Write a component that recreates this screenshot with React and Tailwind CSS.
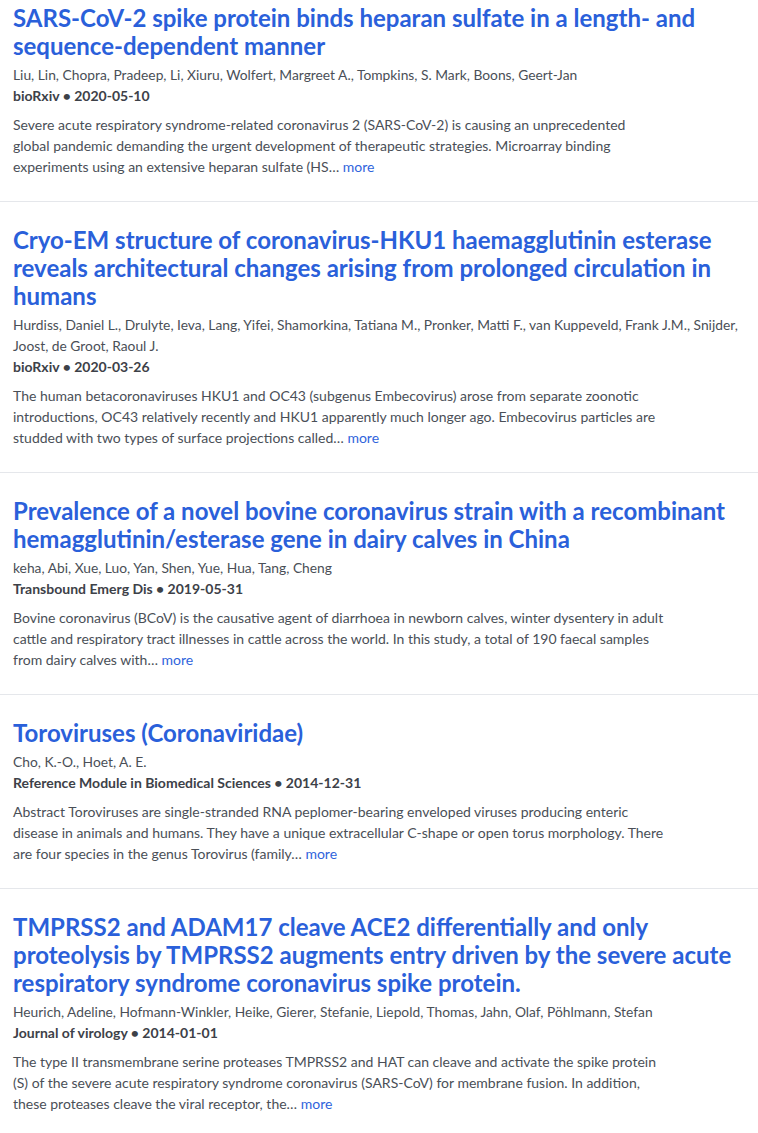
import React from "react";

const items = [
  {
    title: "SARS-CoV-2 spike protein binds heparan sulfate in a length- and sequence-dependent manner",
    authors: "Liu, Lin, Chopra, Pradeep, Li, Xiuru, Wolfert, Margreet A., Tompkins, S. Mark, Boons, Geert-Jan",
    journal: "bioRxiv",
    date: "2020-05-10",
    abstract:
      "Severe acute respiratory syndrome-related coronavirus 2 (SARS-CoV-2) is causing an unprecedented global pandemic demanding the urgent development of therapeutic strategies. Microarray binding experiments using an extensive heparan sulfate (HS…",
  },
  {
    title:
      "Cryo-EM structure of coronavirus-HKU1 haemagglutinin esterase reveals architectural changes arising from prolonged circulation in humans",
    authors:
      "Hurdiss, Daniel L., Drulyte, Ieva, Lang, Yifei, Shamorkina, Tatiana M., Pronker, Matti F., van Kuppeveld, Frank J.M., Snijder, Joost, de Groot, Raoul J.",
    journal: "bioRxiv",
    date: "2020-03-26",
    abstract:
      "The human betacoronaviruses HKU1 and OC43 (subgenus Embecovirus) arose from separate zoonotic introductions, OC43 relatively recently and HKU1 apparently much longer ago. Embecovirus particles are studded with two types of surface projections called…",
  },
  {
    title:
      "Prevalence of a novel bovine coronavirus strain with a recombinant hemagglutinin/esterase gene in dairy calves in China",
    authors: "keha, Abi, Xue, Luo, Yan, Shen, Yue, Hua, Tang, Cheng",
    journal: "Transbound Emerg Dis",
    date: "2019-05-31",
    abstract:
      "Bovine coronavirus (BCoV) is the causative agent of diarrhoea in newborn calves, winter dysentery in adult cattle and respiratory tract illnesses in cattle across the world. In this study, a total of 190 faecal samples from dairy calves with…",
  },
  {
    title: "Toroviruses (Coronaviridae)",
    authors: "Cho, K.-O., Hoet, A. E.",
    journal: "Reference Module in Biomedical Sciences",
    date: "2014-12-31",
    abstract:
      "Abstract Toroviruses are single-stranded RNA peplomer-bearing enveloped viruses producing enteric disease in animals and humans. They have a unique extracellular C-shape or open torus morphology. There are four species in the genus Torovirus (family…",
  },
  {
    title:
      "TMPRSS2 and ADAM17 cleave ACE2 differentially and only proteolysis by TMPRSS2 augments entry driven by the severe acute respiratory syndrome coronavirus spike protein.",
    authors:
      "Heurich, Adeline, Hofmann-Winkler, Heike, Gierer, Stefanie, Liepold, Thomas, Jahn, Olaf, Pöhlmann, Stefan",
    journal: "Journal of virology",
    date: "2014-01-01",
    abstract:
      "The type II transmembrane serine proteases TMPRSS2 and HAT can cleave and activate the spike protein (S) of the severe acute respiratory syndrome coronavirus (SARS-CoV) for membrane fusion. In addition, these proteases cleave the viral receptor, the…",
  },
];

export default function App() {
  return (
    <div className="w-[758px] bg-white font-['Lato','Open_Sans',sans-serif]">
      {items.map((it, i) => (
        <div
          key={i}
          className={`px-[13px] pb-6 ${i === 0 ? "pt-[4px]" : "pt-6"} ${
            i < items.length - 1 ? "border-b border-[#e5e7eb]" : ""
          }`}
        >
          <a className="block text-[24px] leading-[28px] font-bold text-[#2a60da]">{it.title}</a>
          <div className="mt-1 text-[13.8px] leading-[21px] text-[#4a4f57]">{it.authors}</div>
          <div className="text-[14px] leading-[21px] font-bold text-[#3d4148]">
            {it.journal} • {it.date}
          </div>
          <p className="mt-2 max-w-[651px] text-[14px] leading-[21px] text-[#4a4f57]">
            {it.abstract} <a className="text-[#2f64dc]">more</a>
          </p>
        </div>
      ))}
    </div>
  );
}
